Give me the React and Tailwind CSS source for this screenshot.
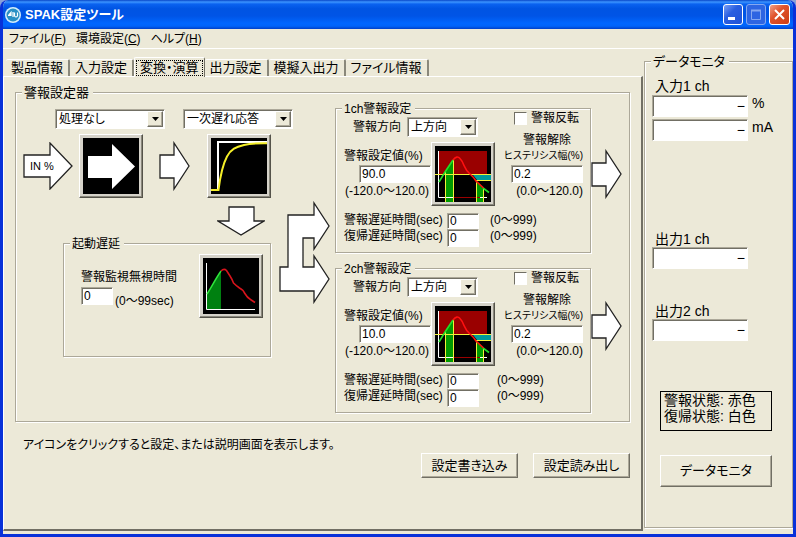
import { useState } from "react";

const TABS = ["製品情報", "入力設定", "変換・演算", "出力設定", "模擬入出力", "ファイル情報"];

const MENUS = [
  { label: "ファイル", key: "F" },
  { label: "環境設定", key: "C" },
  { label: "ヘルプ", key: "H" },
];

/* ── basic controls ── */

function GroupBox({ title, className = "", legendClass = "text-xs", children }) {
  return (
    <fieldset className={`min-w-0 border border-[#aca899] shadow-[1px_1px_0_#fff,inset_1px_1px_0_#fff] ${className}`}>
      <legend className="ml-1.5 flex h-[3px] items-center">
        <span className={`bg-[#ece9d8] pr-1 pl-0.5 leading-4 ${legendClass}`}>{title}</span>
      </legend>
      {children}
    </fieldset>
  );
}

function TextBox({ className = "", ...props }) {
  return (
    <input
      type="text"
      className={`block border border-t-[#aca899] border-r-white border-b-white border-l-[#aca899] bg-white px-[2px] text-xs shadow-[inset_1px_1px_0_#716f64] outline-none ${className}`}
      {...props}
    />
  );
}

function Select({ options, className = "", ...props }) {
  return (
    <div className={`relative h-5 border border-t-[#aca899] border-r-white border-b-white border-l-[#aca899] bg-white shadow-[inset_1px_1px_0_#716f64] ${className}`}>
      <select className="block h-full w-full appearance-none bg-transparent pl-[3px] text-xs outline-none" {...props}>
        {options.map((o) => (
          <option key={o}>{o}</option>
        ))}
      </select>
      <span className="pointer-events-none absolute top-px right-px bottom-px flex w-4 items-center justify-center border border-t-white border-r-[#716f64] border-b-[#716f64] border-l-white bg-[#ece9d8] shadow-[inset_-1px_-1px_0_#aca899]">
        <svg width="7" height="4" viewBox="0 0 7 4">
          <path d="M0 0h7L3.500 4z" fill="#000" />
        </svg>
      </span>
    </div>
  );
}

function PushButton({ className = "", children }) {
  return (
    <button
      type="button"
      className={`border border-t-white border-r-[#716f64] border-b-[#716f64] border-l-white bg-[#ece9d8] text-center text-[13px] shadow-[inset_-1px_-1px_0_#aca899] ${className}`}
    >
      {children}
    </button>
  );
}

function IconButton({ label, children }) {
  return (
    <button
      type="button"
      aria-label={label}
      className="h-16 w-16 shrink-0 border border-t-white border-r-[#55534a] border-b-[#55534a] border-l-white bg-[#d6d3ca] p-[3px] shadow-[inset_-1px_-1px_0_#8a887c]"
    >
      <svg width="56" height="56" viewBox="0 0 56 56" className="block bg-black">
        {children}
      </svg>
    </button>
  );
}

/* ── flow arrows ── */

function Arrow({ width, height, points, className = "", children }) {
  return (
    <svg width={width} height={height} viewBox={`0 0 ${width} ${height}`} className={`shrink-0 ${className}`}>
      <polygon points={points} fill="#fff" stroke="#222" strokeWidth="1.300" />
      {children}
    </svg>
  );
}

function RightArrow({ className }) {
  return <Arrow width={31} height={50} points="1,14 15,14 15,2 30,25 15,48 15,37 1,37" className={className} />;
}

/* ── pictures on the icon buttons ── */

function PassIcon() {
  return <polygon points="5,18 29,18 29,6 52,28.500 29,51 29,40 5,40" fill="#fff" />;
}

function FirstOrderIcon() {
  return (
    <g fill="none" strokeWidth="2">
      <path d="M7 52V4h49" stroke="#fff" />
      <path d="M0 52h7.500C9 40 12 26 16 18.500S25 9 33 7s14-1.800 23-1.800" stroke="#f4ee28" />
    </g>
  );
}

function StartupIcon() {
  return (
    <>
      <path d="M4 36L18 13V51H4z" fill="#008010" />
      <path d="M3.500 5V51.500H52" fill="none" stroke="#fff" />
      <path d="M4 36C8 30 13 20 18 13" fill="none" stroke="#2ee63c" strokeWidth="1.500" />
      <path d="M18 13q3-3 5.500-.5L27 18q2 3 3.500 7 3 3 6 5 4 2 5 5 3 5 6 6.500l4.500 3" fill="none" stroke="#d8141c" strokeWidth="1.600" />
    </>
  );
}

function AlarmIcon() {
  return (
    <>
      <rect x="4" y="5" width="48" height="23" fill="#9a0000" />
      <path d="M10 26L18 14V56H10z" fill="#009a00" />
      <path d="M42 35L49 42V56H42z" fill="#009a00" />
      <path d="M38 29H56V34H42z" fill="#009a9a" />
      <path d="M3.500 5V51.500H52" fill="none" stroke="#fff" />
      <path d="M19 51.500H45" stroke="#9a0000" />
      <path d="M0 28.500H56M42 34.500H56M10.500 26V56M18.500 14V56M41.500 34V56M48.500 42V56" fill="none" stroke="#f2f23a" />
      <path d="M4 36L10 26 18 14M48 42L54 46.500" fill="none" stroke="#20e028" strokeWidth="1.600" />
      <path d="M18 14q4-5 7-1.500 2 2 4 7t6 8.500 6 7l7.500 7" fill="none" stroke="#ff1010" strokeWidth="1.600" />
    </>
  );
}

/* ── alarm settings of one channel ── */

function AlarmChannel({ ch, setValue, delayClass }) {
  const id = (name) => `ch${ch}-${name}`;

  return (
    <GroupBox title={`${ch}ch警報設定`} className="h-[146px] w-64">
      <div className="flex justify-between pr-[7px]">
        <div className="pt-[7px]">
          <div className="flex items-center gap-1.5 pl-[17px]">
            <label htmlFor={id("dir")} className="w-12">警報方向</label>
            <Select id={id("dir")} options={["上方向", "下方向"]} className="w-[71px]" />
          </div>
          <div className="flex pl-2">
            <div className="w-[87px] pt-[11px]">
              <label htmlFor={id("value")} className="block whitespace-nowrap">警報設定値(%)</label>
              <TextBox id={id("value")} defaultValue={setValue} className="mt-px ml-[15px] h-[18px] w-[72px]" />
              <p className="pr-0.5 text-right whitespace-nowrap">(-120.0～120.0)</p>
            </div>
            <div className="pt-[5px]">
              <IconButton label="警報設定">
                <AlarmIcon />
              </IconButton>
            </div>
          </div>
        </div>

        <div className="flex flex-col items-end">
          <label className="flex items-center gap-1 pr-1">
            <input
              type="checkbox"
              className="h-[13px] w-[13px] appearance-none border border-t-[#716f64] border-r-white border-b-white border-l-[#716f64] bg-white checked:bg-[#716f64]"
            />
            警報反転
          </label>
          <p className="pt-1.5 pr-3">警報解除</p>
          <label htmlFor={id("hys")} className="text-[10px] leading-4 whitespace-nowrap">ヒステリシス幅(%)</label>
          <TextBox id={id("hys")} defaultValue="0.2" className="mt-px h-[18px] w-[72px]" />
          <p>(0.0～120.0)</p>
        </div>
      </div>

      <div className="flex items-start pt-1.5 pl-2">
        <div className="w-[103px] whitespace-nowrap">
          <label htmlFor={id("on")} className="block">警報遅延時間(sec)</label>
          <label htmlFor={id("off")} className="block">復帰遅延時間(sec)</label>
        </div>
        <div className="pt-px">
          <TextBox id={id("on")} defaultValue="0" className="h-4 w-8" />
          <TextBox id={id("off")} defaultValue="0" className="h-[18px] w-8" />
        </div>
        <div className={delayClass}>
          <p>(0～999)</p>
          <p>(0～999)</p>
        </div>
      </div>
    </GroupBox>
  );
}

/* ── data monitor ── */

function Readout({ label, unit }) {
  return (
    <div className="flex items-start gap-1">
      <input
        readOnly
        aria-label={label}
        value="−"
        className="block h-[22px] w-24 border border-t-[#aca899] border-r-white border-b-white border-l-[#aca899] bg-white pr-0.5 text-right text-sm shadow-[inset_1px_1px_0_#716f64] outline-none"
      />
      {unit && <span className="text-sm leading-4">{unit}</span>}
    </div>
  );
}

function DataMonitor() {
  return (
    <GroupBox title="データモニタ" legendClass="text-[13px]" className="min-h-[468px] w-[149px] flex-1">
      <div className="pl-[7px] text-sm">
        <p className="pt-[15px] pl-[3px] leading-4">入力1 ch</p>
        <div className="flex flex-col gap-0.5 pt-px">
          <Readout label="入力1 ch %" unit="%" />
          <Readout label="入力1 ch mA" unit="mA" />
        </div>
        <p className="pt-[90px] pl-[3px] leading-4">出力1 ch</p>
        <Readout label="出力1 ch" />
        <p className="pt-[34px] pl-[3px] leading-4">出力2 ch</p>
        <Readout label="出力2 ch" />
      </div>
      <div className="mt-[50px] ml-[15px] h-10 w-28 border border-black pl-[3px] text-sm leading-4">
        <p>警報状態: 赤色</p>
        <p>復帰状態: 白色</p>
      </div>
      <PushButton className="mt-6 ml-[15px] block h-8 w-28">データモニタ</PushButton>
    </GroupBox>
  );
}

/* ── title bar ── */

function TitleBar() {
  return (
    <header className="flex h-[29px] items-center bg-[linear-gradient(#0846c8_0%,#3c94ff_7%,#0a62f0_14%,#0054e3_30%,#0054e6_55%,#0066ff_80%,#0064fa_90%,#0040c8_100%)] pr-1.5 pl-[5px]">
      <svg width="16" height="16" viewBox="0 0 16 16">
        <circle cx="8" cy="8" r="8" fill="#d4eefa" />
        <circle cx="8" cy="8" r="6.500" fill="#2a8fc4" />
        <path d="M3 8.500h3V5.500L3.500 8.500M8 5v5M9.500 5.500v3.500q1.500 2 3 0V5.500" fill="none" stroke="#fff" strokeWidth="1.200" />
      </svg>
      <h1 className="flex-1 pl-1 text-[13px] font-bold text-white">SPAK設定ツール</h1>
      <div className="flex gap-[3px]">
        <button type="button" aria-label="最小化" className="h-[21px] w-5 rounded-[3px] border border-white bg-[linear-gradient(135deg,#7a9ff5,#2a5fe0_40%,#1f52d8)]">
          <svg width="18" height="19" viewBox="0 0 18 19">
            <rect x="4" y="12" width="7" height="3" fill="#fff" />
          </svg>
        </button>
        <button type="button" aria-label="最大化" disabled className="h-[21px] w-5 rounded-[3px] border border-[#86a8f0] bg-[#2e65e2]">
          <svg width="18" height="19" viewBox="0 0 18 19">
            <path d="M4.500 5v9.500h9V5" fill="none" stroke="#86a8f0" />
            <path d="M4 5.500h10" stroke="#86a8f0" strokeWidth="2" />
          </svg>
        </button>
        <button type="button" aria-label="閉じる" className="h-[21px] w-[21px] rounded-[3px] border border-white bg-[linear-gradient(135deg,#f0a088,#e0532c_40%,#cc3d14)]">
          <svg width="19" height="19" viewBox="0 0 19 19">
            <path d="M5 5l9 9M14 5l-9 9" stroke="#fff" strokeWidth="2" />
          </svg>
        </button>
      </div>
    </header>
  );
}

export default function App() {
  const [tab, setTab] = useState(2);

  return (
    <div className="min-h-screen bg-[#8aa0d8] font-['Liberation_Sans','Noto_Sans_CJK_JP',sans-serif] text-xs leading-4 text-black [font-feature-settings:'palt']">
      <div className="flex min-h-screen flex-col overflow-hidden rounded-t-lg border-x-[3px] border-b-[3px] border-[#0831d9] bg-[#ece9d8]">
        <div className="-mx-[3px]">
          <TitleBar />
        </div>

        <nav className="flex h-5 items-center gap-2.5 border-b border-white pl-1.5">
          {MENUS.map((m) => (
            <button key={m.key} type="button">
              {m.label}(<span className="underline">{m.key}</span>)
            </button>
          ))}
        </nav>

        <div className="flex flex-1 pb-[3px]">
          <main className="flex min-w-0 flex-1 flex-col">
            {/* tabs */}
            <div role="tablist" className="flex h-[27px] items-end pl-[3px]">
              {TABS.map((t, i) => (
                <button
                  key={t}
                  type="button"
                  role="tab"
                  aria-selected={tab === i}
                  onClick={() => setTab(i)}
                  className={
                    tab === i
                      ? "relative -mb-px h-5 rounded-t-[2px] border-t border-r border-l border-t-white border-r-[#716f64] border-l-white bg-[#ece9d8] p-px text-[13px]"
                      : "h-[17px] rounded-t-[2px] border-t border-r-2 border-t-white border-r-[#8a887b] px-[5px] text-[13px]"
                  }
                >
                  {tab === i ? <span className="block h-4 border border-dotted border-black px-[3px] leading-[14px]">{t}</span> : t}
                </button>
              ))}
            </div>

            {/* tab page */}
            <div className="flex-1 border-t border-r-2 border-b-2 border-l border-t-white border-r-[#716f64] border-b-[#716f64] border-l-white pt-3.5 pr-[11px] pl-[11px]">
              <GroupBox title="警報設定器" legendClass="text-[13px]" className="h-[331px]">
                <div className="flex justify-between pr-[7px]">
                  <div className="pt-[15px]">
                    <div className="flex gap-[18px] pl-[39px]">
                      <Select aria-label="入力処理" options={["処理なし", "開平演算"]} className="w-[110px]" />
                      <Select aria-label="応答" options={["一次遅れ応答", "移動平均"]} className="w-[110px]" />
                    </div>

                    <div className="flex items-center pt-[5px] pl-[7px]">
                      <Arrow width={50} height={48} points="1,13 27,13 27,1 49,24 27,47 27,35 1,35">
                        <text x="7" y="28" fontSize="11">IN %</text>
                      </Arrow>
                      <div className="pr-4 pl-1.5">
                        <IconButton label="処理なし">
                          <PassIcon />
                        </IconButton>
                      </div>
                      <RightArrow />
                      <div className="pl-[17px]">
                        <IconButton label="一次遅れ応答">
                          <FirstOrderIcon />
                        </IconButton>
                      </div>
                    </div>

                    <div className="flex items-start gap-2 pl-[47px]">
                      <div className="w-52">
                        <Arrow
                          width={48}
                          height={30}
                          points="12,1 37,1 37,15 47,15 24,29 1,15 12,15"
                          className="mt-2 mr-1.5 mb-1.5 ml-auto"
                        />
                        <GroupBox title="起動遅延" className="h-[115px]">
                          <div className="flex justify-between pt-[9px] pr-[7px] pl-[17px]">
                            <div className="pt-[15px]">
                              <label htmlFor="startup" className="block whitespace-nowrap">警報監視無視時間</label>
                              <div className="flex items-end gap-0.5 pt-0.5">
                                <TextBox id="startup" defaultValue="0" className="h-[18px] w-8" />
                                <span className="-mb-1">(0～99sec)</span>
                              </div>
                            </div>
                            <IconButton label="起動遅延">
                              <StartupIcon />
                            </IconButton>
                          </div>
                        </GroupBox>
                      </div>
                      <Arrow
                        width={51}
                        height={104}
                        points="9,14 35,14 35,2 50,25 35,48 35,37 24,37 24,66 35,66 35,55 50,78 35,101 35,90 1,90 1,66 9,66"
                        className="mt-[3px]"
                      />
                    </div>
                  </div>

                  <div className="flex flex-col gap-3.5 pt-[13px]">
                    <div className="flex items-start">
                      <AlarmChannel ch={1} setValue="90.0" delayClass="pl-[11px]" />
                      <RightArrow className="mt-[42px]" />
                    </div>
                    <div className="flex items-start">
                      <AlarmChannel ch={2} setValue="10.0" delayClass="pl-[18px]" />
                      <RightArrow className="mt-[34px]" />
                    </div>
                  </div>
                </div>
              </GroupBox>

              <div className="flex items-start gap-[15px] pt-[15px]">
                <p className="flex-1 pl-2 whitespace-nowrap">アイコンをクリックすると設定、または説明画面を表示します。</p>
                <PushButton className="mt-4 h-[25px] w-[97px]">設定書き込み</PushButton>
                <PushButton className="mt-4 h-[25px] w-[97px]">設定読み出し</PushButton>
              </div>
            </div>
          </main>

          <aside className="flex pt-[11px] pb-[3px] pl-px">
            <DataMonitor />
          </aside>
        </div>
      </div>
    </div>
  );
}
